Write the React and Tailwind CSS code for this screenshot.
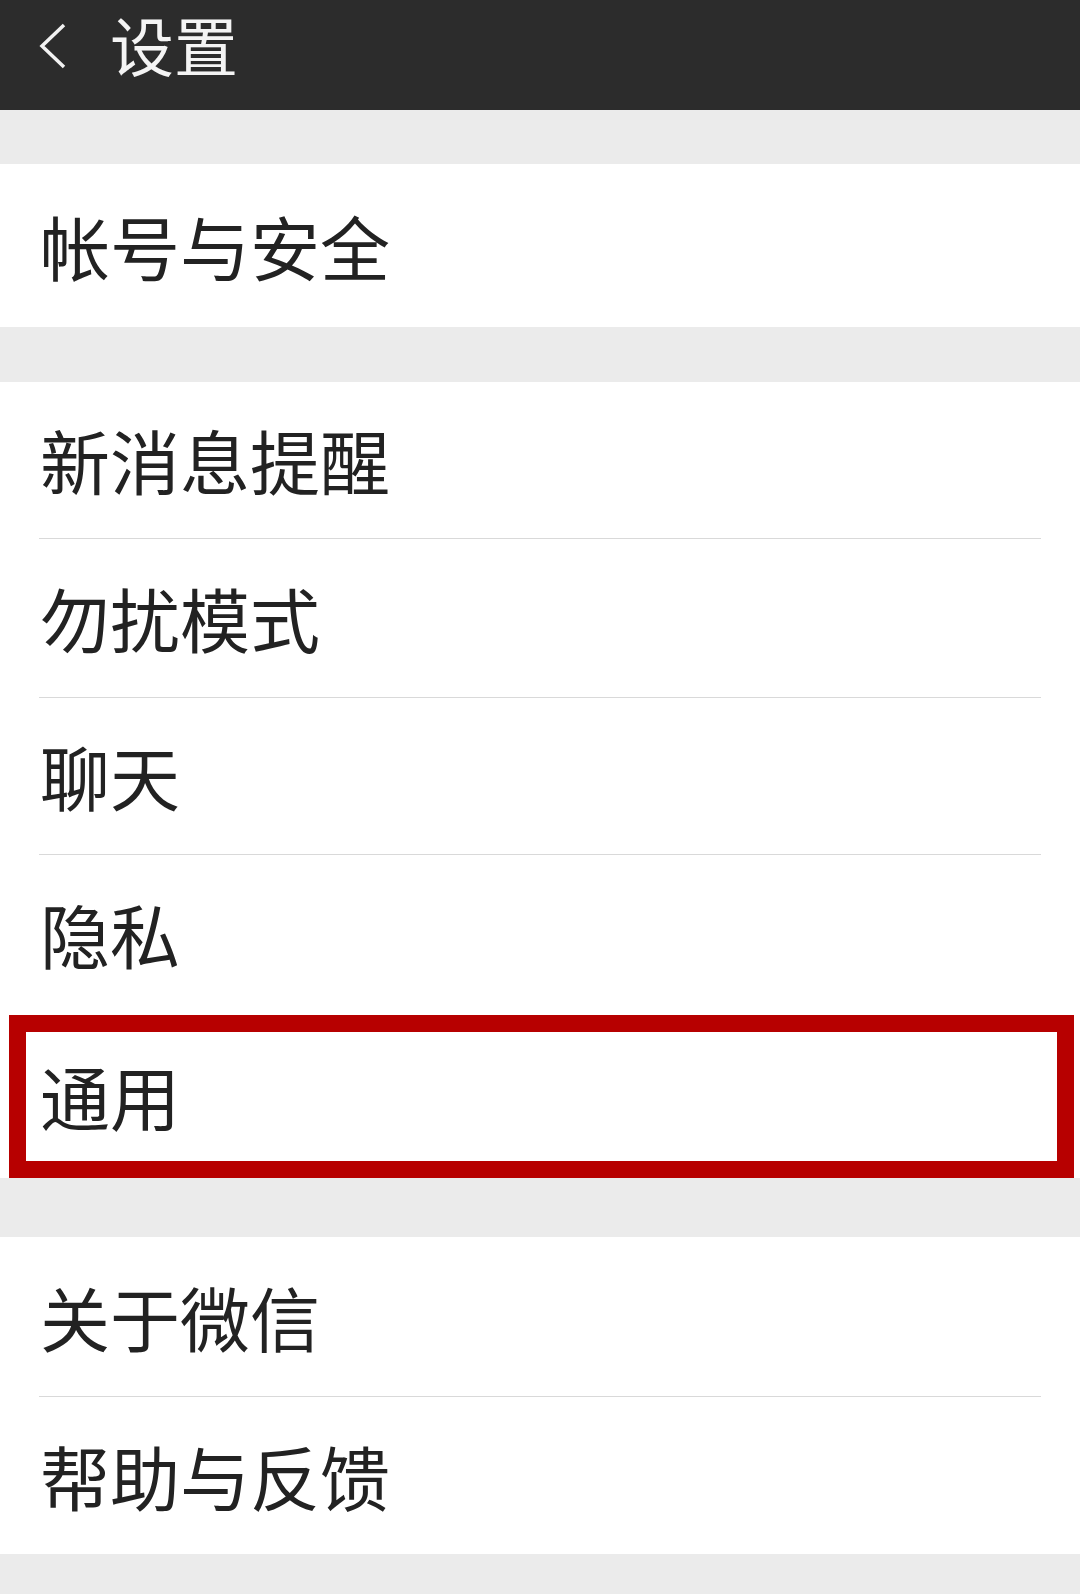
import React from 'react';

const font = { fontFamily: '"Noto Sans CJK SC", "Noto Sans", sans-serif' };

function Row({ label, h, divider = false, children }) {
  return (
    <div className="relative bg-white">
      <div className="flex items-center pl-[40px]" style={{ height: h }}>
        <span className="text-[70px] leading-none text-[#222222]">{label}</span>
      </div>
      {divider && <div className="mx-[39px] h-px bg-[#d9d9d9]" />}
      {children}
    </div>
  );
}

export default function App() {
  return (
    <div className="w-[1080px] h-[1594px] bg-[#ebebeb] overflow-hidden" style={font}>
      {/* Header */}
      <div className="h-[110px] bg-[#2c2c2c] flex items-start">
        <svg width="30" height="50" viewBox="0 0 30 50" className="ml-[38px] mt-[22px]">
          <polyline points="26,3 4,24 26,45" fill="none" stroke="#f2f2f2" strokeWidth="3.5" />
        </svg>
        <span className="ml-[42px] mt-[3px] text-[64px] leading-[80px] text-[#f4f4f4]">设置</span>
      </div>

      <div className="h-[54px]" />
      <Row label="帐号与安全" h={163} />

      <div className="h-[55px]" />
      <Row label="新消息提醒" h={156} divider />
      <Row label="勿扰模式" h={158} divider />
      <Row label="聊天" h={156} divider />
      <Row label="隐私" h={158} />
      <Row label="通用" h={165}>
        <div className="absolute top-[2px] left-[9px] right-[6px] bottom-0 border-[17px] border-[#b70000]" />
      </Row>

      <div className="h-[59px]" />
      <Row label="关于微信" h={159} divider />
      <Row label="帮助与反馈" h={157} />
    </div>
  );
}
